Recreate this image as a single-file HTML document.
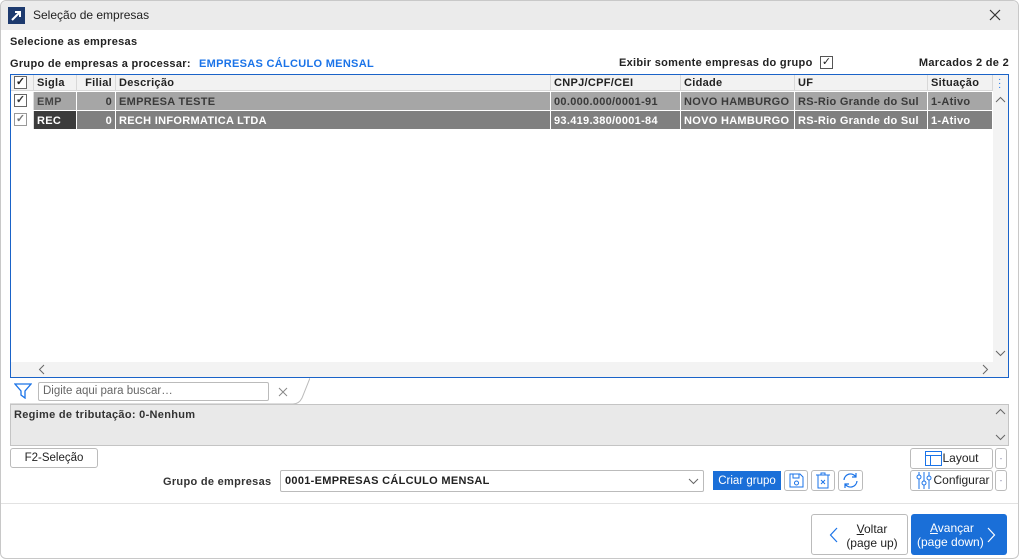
<!DOCTYPE html><html><head><style>
*{box-sizing:border-box;margin:0;padding:0}
body{width:1019px;height:559px;position:relative;font-family:"Liberation Sans",sans-serif;font-size:11px;color:#222;background:#fff;overflow:hidden}
.a{position:absolute}
.b{font-weight:bold;letter-spacing:0.3px}
.cell{position:absolute;top:0;height:100%;border-right:1px solid #fff;padding:2px 3px;white-space:nowrap;line-height:15px}
.hdr .cell{border-right:1px solid #d8d8d8}
.cb{position:absolute;left:3px;top:2px;width:13px;height:13px;border:1px solid #666;background:#fff;font-size:11px;line-height:11px;text-align:center;letter-spacing:0}
.btn{position:absolute;border:1px solid #bbb;border-radius:3px;background:#fff;text-align:center}
</style></head><body>
<div class="a" style="left:0;top:0;width:1019px;height:559px;border:1px solid #c8c8c8;border-radius:6px"></div>
<div class="a" style="left:1px;top:1px;width:1017px;height:29px;background:#ebebeb;border-radius:6px 6px 0 0"></div>
<div class="a" style="left:8px;top:7px;width:17px;height:17px;background:#1d3a6e"></div>
<svg class="a" style="left:8px;top:7px" width="17" height="17"><path d="M4 13 L12 5 M7 5 H12 V10" stroke="#fff" stroke-width="2" fill="none"/></svg>
<div class="a" style="left:33px;top:8px;font-size:12px">Seleção de empresas</div>
<svg class="a" style="left:989px;top:9px" width="12" height="12"><path d="M1 1L11 11M11 1L1 11" stroke="#333" stroke-width="1.2"/></svg>
<div class="a b" style="left:10px;top:36px">Selecione as empresas</div>
<div class="a b" style="left:10px;top:58px">Grupo de empresas a processar:</div>
<div class="a b" style="left:199px;top:58px;color:#1a73e8">EMPRESAS CÁLCULO MENSAL</div>
<div class="a b" style="left:619px;top:57px">Exibir somente empresas do grupo</div>
<div class="a" style="left:820px;top:56px;width:13px;height:13px;border:1px solid #555;font-size:11px;line-height:11px;text-align:center">✓</div>
<div class="a b" style="right:10px;top:57px">Marcados 2 de 2</div>
<div class="a" style="left:10px;top:74px;width:999px;height:304px;border:1px solid #1a63c8"></div>
<div class="a hdr b" style="left:11px;top:75px;width:982px;height:16px;background:#f2f2f2;border-bottom:1px solid #d8d8d8">
<div class="cell" style="left:0;width:23px"><div class="cb" style="top:1px">✓</div></div>
<div class="cell" style="left:23px;width:43px;padding-top:1px">Sigla</div>
<div class="cell" style="left:66px;width:39px;text-align:right;padding-top:1px">Filial</div>
<div class="cell" style="left:105px;width:435px;padding-top:1px">Descrição</div>
<div class="cell" style="left:540px;width:130px;padding-top:1px">CNPJ/CPF/CEI</div>
<div class="cell" style="left:670px;width:114px;padding-top:1px">Cidade</div>
<div class="cell" style="left:784px;width:133px;padding-top:1px">UF</div>
<div class="cell" style="left:917px;width:65px;padding-top:1px">Situação</div>
</div>
<div class="a b" style="left:11px;top:92px;width:982px;height:18px;background:#a6a6a6;color:#3a3a3a">
<div class="cell" style="left:0;width:23px;background:#fff;border-color:#ddd"><div class="cb">✓</div></div>
<div class="cell" style="left:23px;width:43px;color:#444;padding-top:3px">EMP</div>
<div class="cell" style="left:66px;width:39px;text-align:right;padding-top:3px">0</div>
<div class="cell" style="left:105px;width:435px;padding-top:3px">EMPRESA TESTE</div>
<div class="cell" style="left:540px;width:130px;padding-top:3px">00.000.000/0001-91</div>
<div class="cell" style="left:670px;width:114px;padding-top:3px">NOVO HAMBURGO</div>
<div class="cell" style="left:784px;width:133px;padding-top:3px">RS-Rio Grande do Sul</div>
<div class="cell" style="left:917px;width:65px;padding-top:3px">1-Ativo</div>
</div>
<div class="a b" style="left:11px;top:111px;width:982px;height:18px;background:#808080;color:#fff">
<div class="cell" style="left:0;width:23px;background:#fff;border-color:#ddd"><div class="cb" style="color:#777;border-color:#999">✓</div></div>
<div class="cell" style="left:23px;width:43px;background:#3c3c3c;padding-top:3px">REC</div>
<div class="cell" style="left:66px;width:39px;text-align:right;padding-top:3px">0</div>
<div class="cell" style="left:105px;width:435px;padding-top:3px">RECH INFORMATICA LTDA</div>
<div class="cell" style="left:540px;width:130px;padding-top:3px">93.419.380/0001-84</div>
<div class="cell" style="left:670px;width:114px;padding-top:3px">NOVO HAMBURGO</div>
<div class="cell" style="left:784px;width:133px;padding-top:3px">RS-Rio Grande do Sul</div>
<div class="cell" style="left:917px;width:65px;padding-top:3px">1-Ativo</div>
</div>
<div class="a" style="left:993px;top:75px;width:15px;height:287px;background:#f3f3f3"></div>
<div class="a" style="left:998px;top:78px;color:#1a73e8;font-size:10px;line-height:4px">·<br>·<br>·</div>
<svg class="a" style="left:995px;top:96px" width="11" height="8"><path d="M1 6L5.5 1.5L10 6" stroke="#666" fill="none"/></svg>
<svg class="a" style="left:995px;top:349px" width="11" height="8"><path d="M1 2L5.5 6.5L10 2" stroke="#666" fill="none"/></svg>
<div class="a" style="left:11px;top:362px;width:997px;height:15px;background:#f3f3f3"></div>
<svg class="a" style="left:38px;top:364px" width="8" height="11"><path d="M6 1L1.5 5.5L6 10" stroke="#666" fill="none"/></svg>
<svg class="a" style="left:981px;top:364px" width="8" height="11"><path d="M2 1L6.5 5.5L2 10" stroke="#666" fill="none"/></svg>
<svg class="a" style="left:14px;top:383px" width="18" height="16"><path d="M1 1H17L11 8V15L7 12V8Z" stroke="#1a73e8" fill="none" stroke-width="1.3"/></svg>
<div class="a" style="left:38px;top:382px;width:231px;height:19px;border:1px solid #bbb;border-radius:2px;padding:2px 4px;color:#666;font-size:11.5px">Digite aqui para buscar…</div>
<svg class="a" style="left:278px;top:387px" width="10" height="10"><path d="M1 1L9 9M9 1L1 9" stroke="#888"/></svg>
<svg class="a" style="left:10px;top:378px" width="300" height="28"><path d="M0 26H283Q289 26 292 20L300 0" stroke="#bbb" fill="none"/></svg>
<div class="a" style="left:10px;top:404px;width:999px;height:42px;background:#e9e9e9;border:1px solid #c4c4c4"></div>
<div class="a b" style="left:14px;top:409px;color:#333">Regime de tributação: 0-Nenhum</div>
<svg class="a" style="left:995px;top:408px" width="11" height="8"><path d="M1 6L5.5 1.5L10 6" stroke="#666" fill="none"/></svg>
<svg class="a" style="left:995px;top:433px" width="11" height="8"><path d="M1 2L5.5 6.5L10 2" stroke="#666" fill="none"/></svg>
<div class="btn" style="left:10px;top:448px;width:88px;height:20px;line-height:18px;font-size:11.5px">F2-Seleção</div>
<div class="a b" style="left:163px;top:476px;color:#333">Grupo de empresas</div>
<div class="a b" style="left:280px;top:470px;width:424px;height:22px;border:1px solid #bbb;border-radius:2px;padding:4px 4px">0001-EMPRESAS CÁLCULO MENSAL</div>
<svg class="a" style="left:688px;top:477px" width="11" height="8"><path d="M1 2L5.5 6.5L10 2" stroke="#666" fill="none"/></svg>
<div class="a" style="left:713px;top:471px;width:68px;height:19px;background:#1a6fd8;color:#fff;text-align:center;line-height:20px;font-size:11.5px">Criar grupo</div>
<div class="btn" style="left:784px;top:470px;width:24px;height:21px"></div>
<svg class="a" style="left:788px;top:473px" width="16" height="15"><path d="M2 1H12L15 4V14H2Z M5 1V5H11V1" stroke="#1a73e8" fill="none"/><circle cx="8.5" cy="10" r="2" stroke="#1a73e8" fill="none"/></svg>
<div class="btn" style="left:811px;top:470px;width:24px;height:21px"></div>
<svg class="a" style="left:815px;top:472px" width="16" height="17"><path d="M1 3H15M6 3V1H10V3M3 3V16H13V3M6 8L10 12M10 8L6 12" stroke="#1a73e8" fill="none"/></svg>
<div class="btn" style="left:838px;top:470px;width:25px;height:21px"></div>
<svg class="a" style="left:842px;top:472px" width="17" height="17"><path d="M2 8A6.5 6.5 0 0 1 14 5M15 9A6.5 6.5 0 0 1 3 12M14 1V5H10M3 16V12H7" stroke="#1a73e8" fill="none" stroke-width="1.2"/></svg>
<div class="btn" style="left:910px;top:448px;width:83px;height:21px;line-height:19px;font-size:12px;padding-left:18px">Layout</div>
<svg class="a" style="left:925px;top:451px" width="17" height="15"><rect x="0.5" y="0.5" width="16" height="14" stroke="#1a73e8" fill="none"/><path d="M0 4.5H17M5.5 4.5V15" stroke="#1a73e8"/></svg>
<div class="btn" style="left:995px;top:448px;width:12px;height:21px;color:#88a;font-size:8px;line-height:19px">-</div>
<div class="btn" style="left:910px;top:470px;width:83px;height:21px;line-height:19px;font-size:12px;padding-left:20px">Configurar</div>
<svg class="a" style="left:916px;top:472px" width="16" height="17"><path d="M3 0V17M8 0V17M13 0V17" stroke="#1a73e8"/><circle cx="3" cy="5" r="2" fill="#fff" stroke="#1a73e8"/><circle cx="8" cy="11" r="2" fill="#fff" stroke="#1a73e8"/><circle cx="13" cy="6" r="2" fill="#fff" stroke="#1a73e8"/></svg>
<div class="btn" style="left:995px;top:470px;width:12px;height:21px;color:#88a;font-size:8px;line-height:19px">-</div>
<div class="a" style="left:1px;top:503px;width:1017px;height:1px;background:#e2e2e2"></div>
<div class="btn" style="left:811px;top:514px;width:97px;height:41px;font-size:12px;line-height:14px;padding:7px 0 0 25px"><u>V</u>oltar<br>(page up)</div>
<svg class="a" style="left:829px;top:527px" width="9" height="16"><path d="M8 1L1.5 8L8 15" stroke="#1a73e8" fill="none" stroke-width="1.2"/></svg>
<div class="a" style="left:911px;top:514px;width:96px;height:41px;background:#1a6fd8;color:#fff;border-radius:3px;font-size:12px;line-height:14px;padding:7px 0 0 6px;text-align:left"><span style="padding-left:13px"><u>A</u>vançar</span><br>(page down)</div>
<svg class="a" style="left:987px;top:527px" width="9" height="16"><path d="M1 1L7.5 8L1 15" stroke="#fff" fill="none" stroke-width="1.2"/></svg>
</body></html>
